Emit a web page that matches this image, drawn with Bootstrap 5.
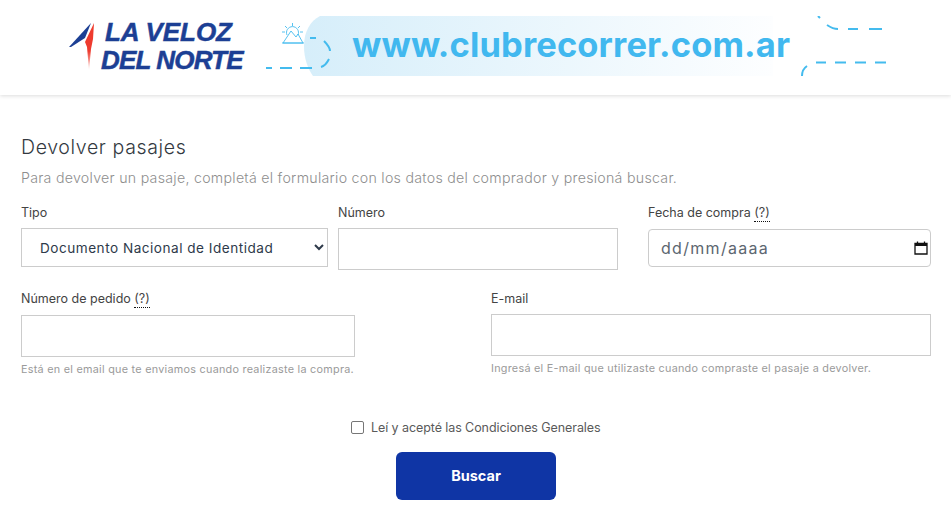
<!DOCTYPE html>
<html lang="es"><head><meta charset="utf-8"><title>Devolver pasajes</title>
<link href="https://cdn.jsdelivr.net/npm/bootstrap@5.3.0/dist/css/bootstrap.min.css" rel="stylesheet">
<style>
html,body{height:516px;overflow:hidden}
body{font-family:"Inter","Liberation Sans",sans-serif;background:#fff;color:#444}
.hdr{height:95px;box-shadow:0 1px 4px rgba(0,0,0,.14)}
.brand{width:175px;margin-left:69px;margin-top:21px;height:52px;gap:11px}
.brand svg{flex:none}
.brandtxt{font:italic 700 26px/28px "Liberation Sans",sans-serif;color:#1c3f94;letter-spacing:-.1px;white-space:nowrap;-webkit-text-stroke:.5px #1c3f94;margin-top:-3px;margin-left:-1px}
.brandtxt div:last-child{margin-left:-4px;letter-spacing:-.85px}
.promo{width:660px;height:60px;margin-top:16px;margin-left:21px;flex:none;position:relative}
.promo svg{position:absolute;left:0;top:0}
.promo-url{position:absolute;left:87px;top:7px;font:700 34.5px/44px "Inter",sans-serif;color:#41b8ef;letter-spacing:.13px;white-space:nowrap}
.wrap{padding:37px 20px 0 21px}
h1.ttl{font-size:19.5px;font-weight:300;color:#33393f;margin:0 0 6px;line-height:30px;letter-spacing:.64px;font-family:"Inter",sans-serif}
.sub{font-size:14.2px;font-weight:300;color:#8e8e8e;line-height:20px;margin:0 0 15px;letter-spacing:.27px}
.lbl{font-size:12.5px;color:#444;margin:0 0 5px;line-height:20px;display:block;font-weight:400}
.lbl abbr{border-bottom:1px dotted #111;text-decoration:none;cursor:help;padding-bottom:1px}
.c1{width:307px;margin-right:10px}.c2{width:280px;margin-right:30px}.c3{width:283px}
.c4{width:334px;margin-right:136px}.c5{width:440px}
.rowa{height:86px}
.rowb{height:104px}
.form-control.fx,.form-select.fx{border:1px solid #ccc;border-radius:0;box-shadow:none;color:#2e3a4a}
.sel{height:39px;font-size:13.6px;padding:0 30px 0 14px;letter-spacing:.5px;background-image:none;appearance:auto;-webkit-appearance:auto;background-color:#fff}
.txt{height:42px}
.pedido{margin-top:6px}
.dtbox{margin-top:6px}
.dt.form-control{height:38px;border:1px solid #ccc;border-radius:4px;font-size:16px;padding:0 32px 0 12px;letter-spacing:1.3px}
.dt.form-control::placeholder{color:#5c6670;opacity:1}
.calico{position:absolute;right:3px;top:12px}
.hlp{font-size:10.8px;color:#9a9a9a;margin-top:5px;line-height:15px;letter-spacing:.27px;white-space:nowrap}
.chk{margin-top:28px;padding-left:330px;height:31px;gap:7px;min-height:0;margin-bottom:0}
.chk .form-check-input{width:13px;height:13px;margin:0;border:1px solid #767676;border-radius:2px;flex:none;float:none}
.chk label{font-size:12.5px;color:#5a5a5a;margin:0;line-height:14px;letter-spacing:-.08px}
.go.btn{display:block;margin:0 0 0 375px;width:160px;height:48px;background:#0f35a5;border:0;border-radius:6px;color:#fff;font-weight:700;font-size:14.5px}
</style></head>
<body>
<header class="hdr d-flex align-items-start bg-white">
  <div class="brand d-flex align-items-start">
    <svg width="26" height="52" viewBox="0 0 26 52"><defs><linearGradient id="r" x1="0" y1="0" x2="0" y2="1"><stop offset=".6" stop-color="#ee3b2e"/><stop offset="1" stop-color="#ee3b2e" stop-opacity=".1"/></linearGradient></defs>
      <path d="M0 26 22 2 16 17 2 26Z" fill="#1c3f94"/><path d="M25 2 16 21 18 26 20 49 22 28 24 18Z" fill="url(#r)"/></svg>
    <div class="brandtxt"><div>LA VELOZ</div><div>DEL NORTE</div></div>
  </div>
  <div class="promo">
    <svg width="660" height="60" viewBox="0 0 660 60" fill="none"><defs><linearGradient id="g" x1="0" x2="1"><stop offset="0" stop-color="#d6eefa"/><stop offset="1" stop-color="#fdfeff"/></linearGradient></defs>
      <path d="M55 0C45 5 39 16 39 30 39 43 43 53 48 60H508V0Z" fill="url(#g)"/>
      <g stroke="#44bbee" stroke-width=".9"><path d="M18 27 26 15 31 21 33 18 38 27Z"/><path d="M22 19a6 6 0 1 1 11 0M17 27H39"/><path d="M27.500 7V10M20 10l2 2M35 10l-2 2M17 16h3M35 16h3"/></g>
      <g stroke="#44bbee" stroke-width="2"><path d="M45 22h6"/><path d="M1 52h6M15 52h12M35 52h12M56 51c4-1 6-4 8-8M59 25c3 3 6 6 6 10"/><path d="M553 0l2 2M562 9c3 2 6 4 11 4M583 13h10M604 13h13"/><path d="M537 60c0-4 2-8 5-10M551 46.500h10M570 46.500h11M590 46.500h11M610 46.500h11"/></g>
    </svg>
    <div class="promo-url">www.clubrecorrer.com.ar</div>
  </div>
</header>
<main class="wrap">
  <h1 class="ttl">Devolver pasajes</h1>
  <p class="sub">Para devolver un pasaje, completá el formulario con los datos del comprador y presioná buscar.</p>
  <form>
    <div class="d-flex rowa">
      <div class="c1"><label class="lbl" for="t">Tipo</label>
        <select id="t" class="form-select fx sel"><option>Documento Nacional de Identidad</option></select></div>
      <div class="c2"><label class="lbl" for="n">Número</label><input id="n" class="form-control fx txt" type="text"></div>
      <div class="c3"><label class="lbl" for="f">Fecha de compra <abbr title="Fecha">(?)</abbr></label>
        <div class="dtbox position-relative"><input id="f" class="form-control dt" type="text" placeholder="dd/mm/aaaa">
          <svg class="calico" width="14" height="14" viewBox="0 0 14 14" fill="none"><path d="M1 2.500H13V13H1Z" stroke="#111" stroke-width="1.300"/><path d="M1 2H13V5H1Z" fill="#111"/><path d="M3.500 .5V3M10.500 .5V3" stroke="#111" stroke-width="1.300"/></svg></div></div>
    </div>
    <div class="d-flex rowb">
      <div class="c4"><label class="lbl" for="p">Número de pedido <abbr title="Pedido">(?)</abbr></label><input id="p" class="form-control fx txt pedido" type="text"><div class="hlp">Está en el email que te enviamos cuando realizaste la compra.</div></div>
      <div class="c5"><label class="lbl" for="e">E-mail</label><input id="e" class="form-control fx txt" type="email"><div class="hlp">Ingresá el E-mail que utilizaste cuando compraste el pasaje a devolver.</div></div>
    </div>
    <div class="form-check chk d-flex align-items-start"><input class="form-check-input" type="checkbox" id="c"><label for="c">Leí y acepté las Condiciones Generales</label></div>
    <button type="button" class="btn go">Buscar</button>
  </form>
</main>
<script src="https://cdn.jsdelivr.net/npm/bootstrap@5.3.0/dist/js/bootstrap.bundle.min.js"></script>
</body></html>
